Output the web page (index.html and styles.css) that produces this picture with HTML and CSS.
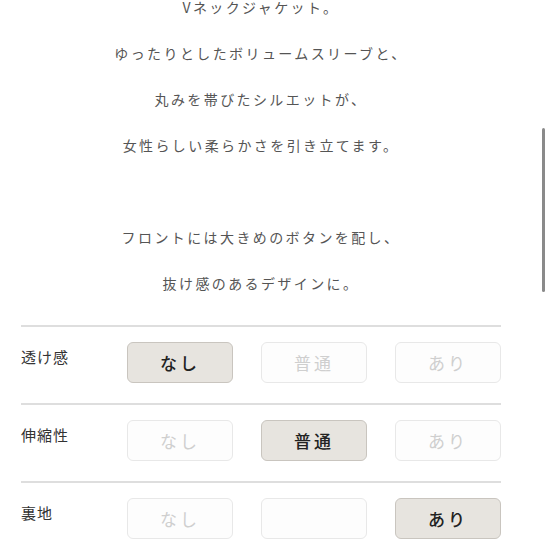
FILE: index.html
```html
<html>
<head>
<meta charset="utf-8">
<link rel="stylesheet" href="styles.css">
</head>
<body>
<div class="page">
  <div class="intro">
    <p>Vネックジャケット。</p>
    <p>ゆったりとしたボリュームスリーブと、</p>
    <p>丸みを帯びたシルエットが、</p>
    <p>女性らしい柔らかさを引き立てます。</p>
    <p>&nbsp;</p>
    <p>フロントには大きめのボタンを配し、</p>
    <p>抜け感のあるデザインに。</p>
  </div>

  <div class="spec">
    <div class="specRow">
      <div class="specLabel">透け感</div>
      <div class="specOpts">
        <span class="opt on">なし</span>
        <span class="opt">普通</span>
        <span class="opt">あり</span>
      </div>
    </div>
    <div class="specRow">
      <div class="specLabel">伸縮性</div>
      <div class="specOpts">
        <span class="opt">なし</span>
        <span class="opt on">普通</span>
        <span class="opt">あり</span>
      </div>
    </div>
    <div class="specRow">
      <div class="specLabel">裏地</div>
      <div class="specOpts">
        <span class="opt">なし</span>
        <span class="opt"></span>
        <span class="opt on">あり</span>
      </div>
    </div>
  </div>
</div>
<div class="scrollThumb"></div>
</body>
</html>
```

FILE: styles.css
```css
body {
  margin: 0;
  overflow: hidden;
  background-color: #fff;
  font-family: "Noto Sans CJK JP", sans-serif;
}

.page {
  width: 480px;
  padding-left: 21px;
}

.intro {
  margin-top: -16px;
  text-align: center;
  color: #555;
  font-size: 14px;
  letter-spacing: 2.4px;
}

.intro p {
  margin: 0;
  line-height: 46px;
}

.spec {
  margin-top: 19px;
}

.specRow {
  display: flex;
  border-top: 2px solid #dedede;
  padding: 15px 0 20px 0;
}

.specLabel {
  width: 107px;
  padding-top: 4px;
  font-size: 15px;
  line-height: 22px;
  color: #333;
  letter-spacing: 1px;
}

.specOpts {
  display: grid;
  grid-template-columns: 106px 106px 106px;
  column-gap: 28px;
}

.opt {
  box-sizing: border-box;
  height: 41px;
  border: 1px solid #e8e8e8;
  border-radius: 6px;
  background-color: #fdfdfd;
  color: #cfcfcf;
  font-size: 17px;
  letter-spacing: 3px;
  display: flex;
  align-items: center;
  justify-content: center;
}

.opt.on {
  background-color: #e7e4df;
  border-color: #c9c5bf;
  color: #222;
  font-weight: 500;
}

.scrollThumb {
  position: absolute;
  left: 542px;
  top: 128px;
  width: 3px;
  height: 164px;
  border-radius: 2px;
  background-color: #8a8a8a;
}
```
